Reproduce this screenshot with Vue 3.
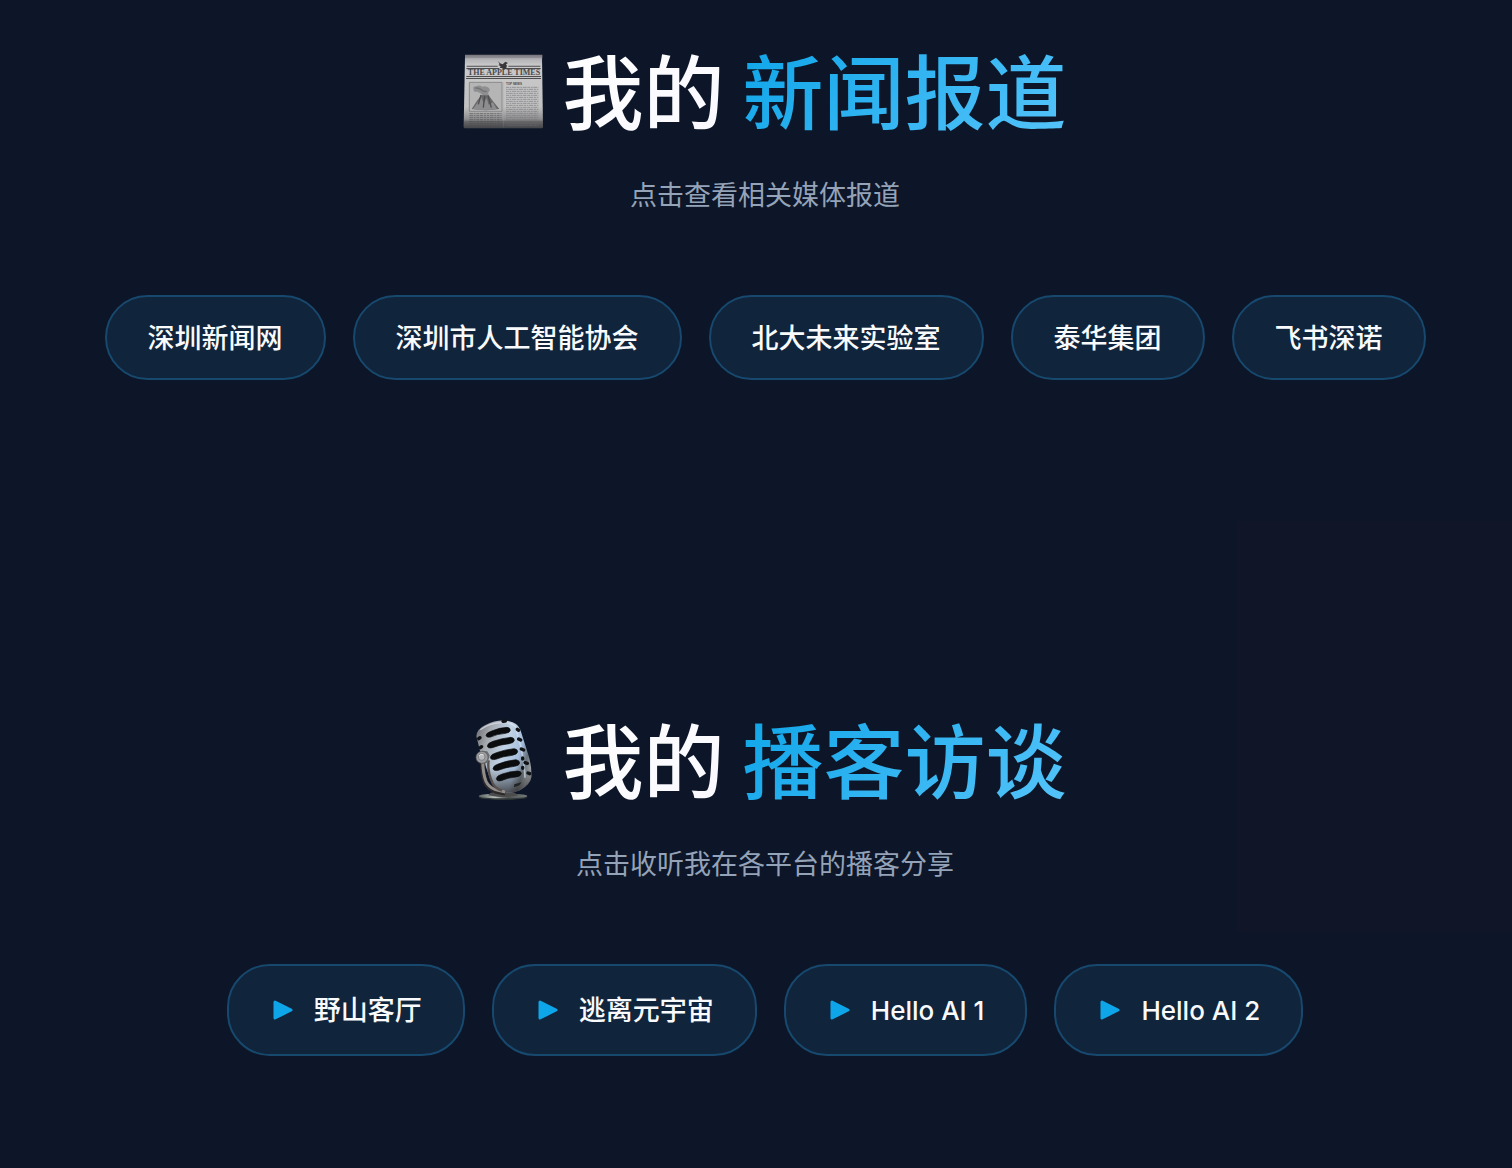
<template>
  <main class="page">
    <div class="glow"></div>

    <section class="block">
      <h2 class="title">
        <svg class="title-icon" viewBox="36 30 243 243" aria-hidden="true">
          <defs>
            <linearGradient id="paper" x1="0" y1="0" x2="0" y2="1">
              <stop offset="0" stop-color="#a9a9ac" />
              <stop offset="0.12" stop-color="#c9c9ca" />
              <stop offset="0.7" stop-color="#c2c2c3" />
              <stop offset="0.86" stop-color="#929294" />
              <stop offset="1" stop-color="#48494c" />
            </linearGradient>
            <linearGradient id="fold" x1="0" y1="0" x2="0" y2="1">
              <stop offset="0" stop-color="#77747c" />
              <stop offset="1" stop-color="#96949a" />
            </linearGradient>
          </defs>
          <path d="M42 50H273L276 262Q276 265 272 265H42Q38 265 38 261Z" fill="url(#paper)" />
          <path d="M42 44H274V55H42Z" fill="url(#fold)" />
          <g fill="#4d4d50">
            <path d="M47 77H140V80H47ZM172 77H268V80H172ZM46 84H145V87H46ZM168 84H269V87H168Z" />
            <path d="M46 108H270V111H46ZM45 114H270V117H45Z" />
          </g>
          <path d="M141 64Q147 71 155 73L163 65L171 69L165 73Q170 77 166 83L172 89L164 87L157 90L154 85L146 83L149 79L142 75L146 73Z" fill="#38383b" />
          <text class="masthead" x="159" y="105" text-anchor="middle">THE APPLE TIMES</text>
          <path d="M55 127H153V214H55Z" fill="#b5b5b6" stroke="#737375" stroke-width="2" />
          <path d="M62 207L79 181L92 165L112 164L125 182L145 207Q104 214 62 207Z" fill="#69696c" />
          <path d="M66 207L91 172L98 190L107 174L113 194L126 187L137 207Q103 213 66 207Z" fill="#8d8d90" />
          <path d="M90 165L82 193M101 166L97 203M111 166L121 203" stroke="#505053" stroke-width="4" fill="none" />
          <path d="M95 166Q88 157 78 155Q68 158 67 146Q65 139 76 139Q84 133 94 140Q104 136 114 144Q120 151 112 157L112 166Z" fill="#8f8f92" />
          <path d="M73 144Q85 143 92 150T108 153" stroke="#747477" stroke-width="4" fill="none" />
          <text class="headline" x="165" y="136">TOP NEWS</text>
          <g stroke="#79797b" stroke-width="2" fill="none">
            <path v-for="y in rightLines" :key="'r' + y" :d="`M165 ${y}H262`" :stroke-dasharray="y % 4 ? '9 2 5 2 12 2' : '5 2 13 2 7 2'" />
            <path v-for="y in leftLines" :key="'l' + y" :d="`M55 ${y}H152`" stroke-dasharray="11 2 6 2 8 2" stroke="#58585b" />
          </g>
          <path d="M158 126V262" stroke="#a5a5a7" stroke-width="1" />
          <path d="M38 242H276V262Q276 265 272 265H42Q38 265 38 261Z" fill="#3c3d40" opacity="0.3" />
        </svg>
        <span class="plain">我的</span>
        <span class="accent">新闻报道</span>
      </h2>
      <p class="subtitle">点击查看相关媒体报道</p>
      <nav class="pills" aria-label="新闻报道">
        <a v-for="item in news" :key="item" class="pill" href="#">{{ item }}</a>
      </nav>
    </section>

    <section class="block">
      <h2 class="title">
        <svg class="title-icon" viewBox="36 42 243 243" aria-hidden="true">
          <defs>
            <linearGradient id="metal" x1="0" y1="0.2" x2="1" y2="0.6">
              <stop offset="0" stop-color="#77797d" />
              <stop offset="0.2" stop-color="#a6abb2" />
              <stop offset="0.5" stop-color="#c1d3e6" />
              <stop offset="0.76" stop-color="#a7bfdd" />
              <stop offset="0.9" stop-color="#687179" />
              <stop offset="1" stop-color="#9a9fa4" />
            </linearGradient>
            <linearGradient id="shade" x1="0" y1="0" x2="0" y2="1">
              <stop offset="0.65" stop-color="#333" stop-opacity="0" />
              <stop offset="1" stop-color="#2e2c2b" stop-opacity="0.75" />
            </linearGradient>
            <linearGradient id="base" x1="0" y1="0" x2="1" y2="0">
              <stop offset="0" stop-color="#5a6261" />
              <stop offset="0.35" stop-color="#b7bfbc" />
              <stop offset="0.6" stop-color="#4d5352" />
              <stop offset="1" stop-color="#747b7a" />
            </linearGradient>
          </defs>
          <ellipse cx="156" cy="276" rx="73" ry="9" fill="#303736" />
          <ellipse cx="156" cy="273" rx="73" ry="7" fill="url(#base)" />
          <path d="M118 264Q150 249 192 264L202 271Q155 282 111 271Z" fill="#4c4c4d" />
          <path d="M76 94Q77 72 103 60Q137 43 172 48Q200 53 208 74L232 149Q243 184 241 217Q237 239 208 255Q182 268 153 259Q130 251 121 230L87 137Z" fill="url(#metal)" />
          <path d="M76 94Q77 72 103 60Q137 43 172 48Q200 53 208 74L232 149Q243 184 241 217Q237 239 208 255Q182 268 153 259Q130 251 121 230L87 137Z" fill="url(#shade)" />
          <path d="M88 74Q120 51 160 53Q184 53 197 69" stroke="#e2e8ef" stroke-width="4" fill="none" opacity="0.7" />
          <path d="M195 73Q219 145 222 218" stroke="#d2e3f5" stroke-width="5" fill="none" opacity="0.65" />
          <g fill="#0b0c0d" stroke="#0b0c0d" stroke-width="2">
            <path d="M105 91Q106 83 122 78Q145 68 168 67Q178 68 178 76Q177 83 164 85Q137 87 119 96Q106 99 105 91Z" />
            <path d="M109 123Q110 114 126 109Q151 100 179 97Q190 98 190 106Q189 114 175 116Q145 119 124 128Q110 131 109 123Z" />
            <path d="M118 157Q119 148 136 143Q161 134 189 131Q200 132 200 140Q199 148 184 151Q155 154 134 163Q119 166 118 157Z" />
            <path d="M126 190Q127 181 144 176Q169 167 195 164Q206 166 206 174Q205 182 191 184Q162 187 142 196Q127 199 126 190Z" />
            <path d="M136 221Q137 212 154 207Q176 199 200 198Q211 199 211 206Q209 214 195 216Q171 218 151 227Q137 230 136 221Z" />
          </g>
          <g stroke="#111315" stroke-width="10" stroke-linecap="round" fill="none">
            <path d="M156 49L163 48M199 73L203 76M203 102L209 105M211 132L218 135M215 159V162M222 173L229 175M215 187V190M231 204L236 206" />
            <path d="M83 101L87 98M88 128L92 125" />
          </g>
          <path d="M190 238L212 232L205 241L189 247Z" fill="#202324" />
          <path d="M95 168Q95 206 103 230Q111 249 133 258L163 264" stroke="#2b2929" stroke-width="15" fill="none" />
          <path d="M95 166Q96 207 105 229Q113 246 133 254L163 261" stroke="#918d8b" stroke-width="9" fill="none" />
          <path d="M113 166Q108 198 125 235Q133 250 153 257" stroke="#57514f" stroke-width="7" fill="none" />
          <path d="M93 137L109 139L116 151L110 173L94 177Z" fill="#6d6e70" />
          <circle cx="93" cy="157" r="18" fill="#9a9c9f" stroke="#54565a" stroke-width="2" />
          <circle cx="92" cy="156" r="10" fill="#b8bbbd" stroke="#6b6d70" stroke-width="2" />
          <path d="M84 153Q89 144 98 150" stroke="#e4e6e8" stroke-width="3" fill="none" />
        </svg>
        <span class="plain">我的</span>
        <span class="accent">播客访谈</span>
      </h2>
      <p class="subtitle">点击收听我在各平台的播客分享</p>
      <nav class="pills" aria-label="播客访谈">
        <a v-for="item in podcasts" :key="item.name" class="pill pill--play" :class="{ 'pill--latin': item.latin }" href="#">
          <svg class="play" viewBox="0 0 30 30" aria-hidden="true">
            <path d="M5 6L21 14L5 22Z" fill="#0ea5e9" stroke="#0ea5e9" stroke-width="3" stroke-linejoin="round" />
          </svg>
          {{ item.name }}
        </a>
      </nav>
    </section>
  </main>
</template>

<script setup>
const news = ['深圳新闻网', '深圳市人工智能协会', '北大未来实验室', '泰华集团', '飞书深诺']
const podcasts = [
  { name: '野山客厅' },
  { name: '逃离元宇宙' },
  { name: 'Hello AI 1', latin: true },
  { name: 'Hello AI 2', latin: true },
]

// rows of fake print on the newspaper
const rightLines = Array.from({ length: 20 }, (_, i) => 142 + i * 6)
const leftLines = Array.from({ length: 7 }, (_, i) => 221 + i * 6)
</script>

<style>
body {
  background: #0d1628;
}
</style>

<style scoped>
.page {
  position: relative;
  box-sizing: border-box;
  min-height: 100vh;
  padding: 42px 0 112px 18px;
  display: flex;
  flex-direction: column;
  gap: 331px;
  overflow: hidden;
  font-family: Inter, "Noto Sans CJK SC", sans-serif;
  color: #fff;
}

/* faint tinted panel behind the right edge */
.glow {
  position: absolute;
  top: 521px;
  right: 0;
  width: 275px;
  height: 411px;
  background: #101627;
}

.block {
  position: relative;
  display: flex;
  flex-direction: column;
  align-items: center;
}

.title {
  display: flex;
  align-items: center;
  gap: 18px;
  margin: 0;
  font-size: 81px;
  line-height: 81px;
  font-weight: 500;
}

.title-icon {
  width: 81px;
  height: 81px;
}

.masthead {
  font: bold 24px "Liberation Serif", serif;
  fill: #4a4a4d;
}

.headline {
  font: bold 9px "Liberation Sans", sans-serif;
  fill: #4a4a4d;
}

.plain,
.accent {
  padding: 12px 0 4px;
  background: linear-gradient(135deg, #fff, #f8f8ff);
  -webkit-background-clip: text;
  background-clip: text;
  color: transparent;
}

.accent {
  background-image: linear-gradient(135deg, #0ea5e9, #56c4fa);
}

.subtitle {
  margin: 36px 0 79px;
  font-size: 27px;
  line-height: 41px;
  color: #94a3b8;
}

.pills {
  display: flex;
  flex-wrap: wrap;
  justify-content: center;
  gap: 27px;
}

.pill {
  display: flex;
  align-items: center;
  padding: 21px 41px 19px;
  border: 2px solid #17486d;
  border-radius: 43px;
  background: #10243c;
  color: #f8fafc;
  font-size: 27px;
  line-height: 41px;
  font-weight: 500;
  text-decoration: none;
}

.pill--play {
  gap: 14px;
  line-height: 48px;
}

.pill--latin {
  font-size: 26px;
}

.play {
  width: 30px;
  height: 30px;
}
</style>
